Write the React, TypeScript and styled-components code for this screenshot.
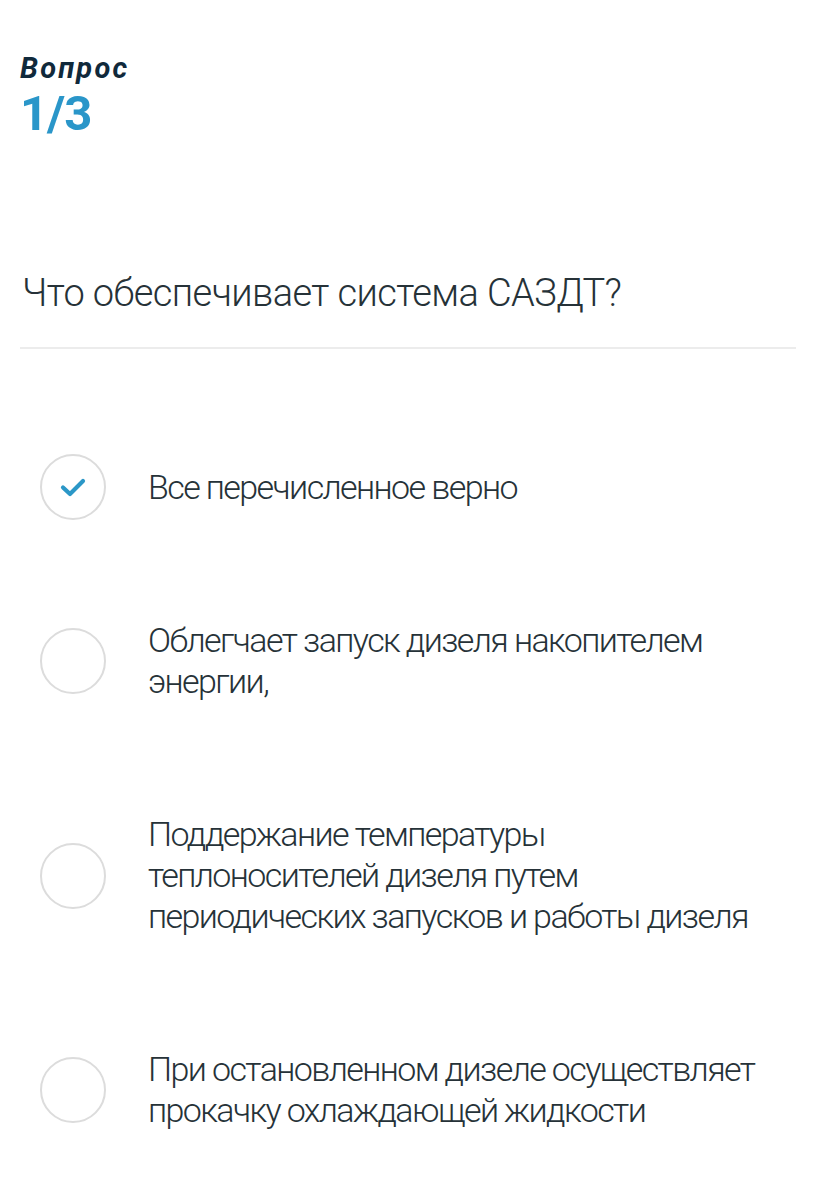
import React, { useState } from 'react';
import styled, { createGlobalStyle } from 'styled-components';

const GlobalStyle = createGlobalStyle`
  html, body {
    margin: 0;
    padding: 0;
    background: #ffffff;
  }
  body {
    font-family: Roboto, "Noto Sans", sans-serif;
    color: #263238;
  }
`;

const Page = styled.div`
  width: 813px;
  padding: 0 17px 0 20px;
  box-sizing: border-box;
`;

const Header = styled.header`
  padding-top: 51px;
  display: flex;
  flex-direction: column;
`;

const Label = styled.div`
  font-size: 29px;
  line-height: 35px;
  font-weight: 700;
  font-style: italic;
  color: #10293b;
  letter-spacing: 2.2px;
`;

const Counter = styled.div`
  font-size: 49px;
  line-height: 56px;
  font-weight: 700;
  color: #2a96c9;
  letter-spacing: -1px;
`;

const Question = styled.h1`
  margin: 127px 0 0 2px;
  font-size: 38px;
  line-height: 48px;
  font-weight: 300;
  color: #263238;
  letter-spacing: -0.6px;
`;

const Divider = styled.hr`
  margin: 30px 0 0;
  border: none;
  height: 2px;
  background: #ececec;
`;

const Options = styled.ul`
  list-style: none;
  margin: 0;
  padding: 97px 0 0 20px;
  display: flex;
  flex-direction: column;
  gap: 72px;
`;

const Option = styled.li`
  display: flex;
  align-items: center;
  gap: 42px;
  padding: 20px 0;
  cursor: pointer;
`;

const Marker = styled.span<{ $checked: boolean }>`
  flex: none;
  width: 62px;
  height: 62px;
  margin: -12px 0;
  border: 2px solid #dcdcdc;
  border-radius: 50%;
  display: flex;
  align-items: center;
  justify-content: center;
  color: #2b97c7;
  box-sizing: content-box;
  svg {
    opacity: ${({ $checked }) => ($checked ? 1 : 0)};
  }
`;

const OptionText = styled.span`
  max-width: 615px;
  font-size: 34px;
  line-height: 41px;
  font-weight: 300;
  color: #263238;
  letter-spacing: -1.6px;
`;

const answers = [
  'Все перечисленное верно',
  'Облегчает запуск дизеля накопителем энергии,',
  'Поддержание температуры теплоносителей дизеля путем периодических запусков и работы дизеля',
  'При остановленном дизеле осуществляет прокачку охлаждающей жидкости'
];

function Check() {
  return (
    <svg width="26" height="20" viewBox="0 0 26 20" fill="none">
      <path d="M3 10.5 L10 17 L23 4" stroke="currentColor" strokeWidth="4.2" strokeLinecap="round" strokeLinejoin="round" />
    </svg>
  );
}

export default function App() {
  const [selected, setSelected] = useState<number>(0);

  return (
    <>
      <GlobalStyle />
      <Page>
        <Header>
          <Label>Вопрос</Label>
          <Counter>1/3</Counter>
        </Header>
        <Question>Что обеспечивает система САЗДТ?</Question>
        <Divider />
        <Options>
          {answers.map((answer, i) => (
            <Option key={i} onClick={() => setSelected(i)}>
              <Marker $checked={selected === i}>
                <Check />
              </Marker>
              <OptionText>{answer}</OptionText>
            </Option>
          ))}
        </Options>
      </Page>
    </>
  );
}
